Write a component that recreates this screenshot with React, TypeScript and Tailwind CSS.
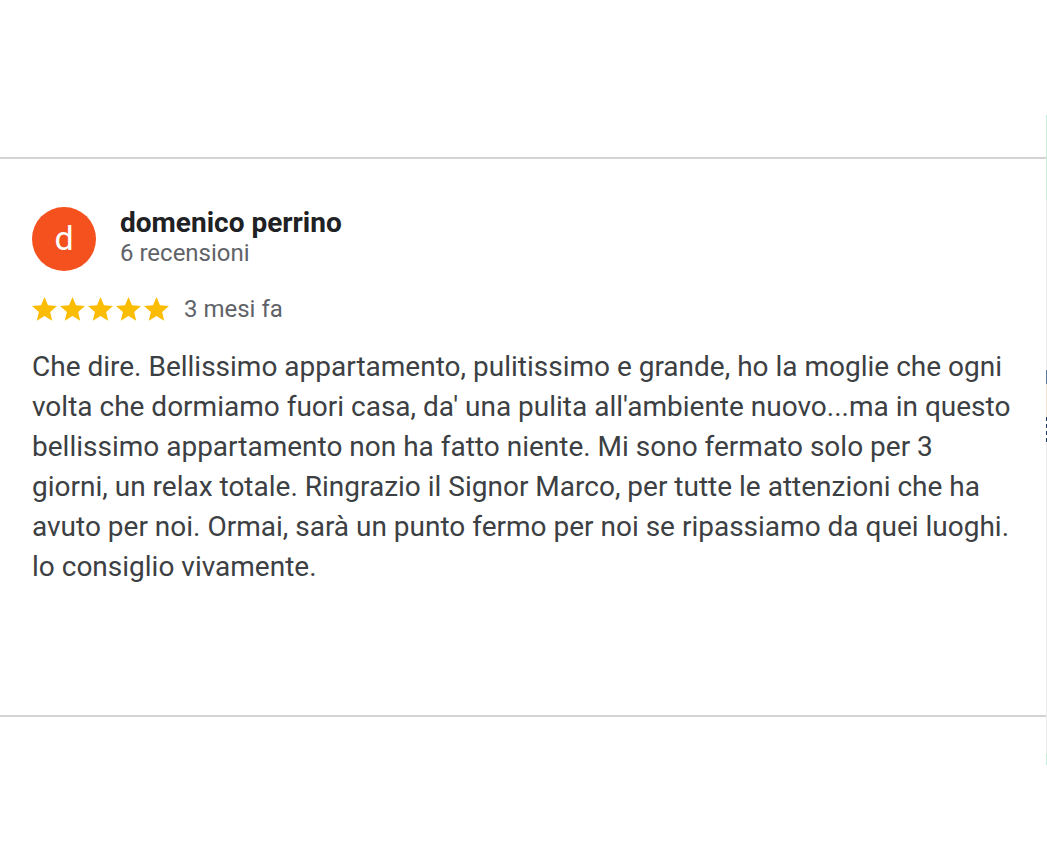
import React from "react";

const review =
  "Che dire. Bellissimo appartamento, pulitissimo e grande, ho la moglie che ogni volta che dormiamo fuori casa, da' una pulita all'ambiente nuovo...ma in questo bellissimo appartamento non ha fatto niente. Mi sono fermato solo per 3 giorni, un relax totale. Ringrazio il Signor Marco, per tutte le attenzioni che ha avuto per noi. Ormai, sarà un punto fermo per noi se ripassiamo da quei luoghi. lo consiglio vivamente.";

function Star() {
  return (
    <svg viewBox="2 2 20 19.3" className="w-[25px] h-[24px]" fill="#fbbc04">
      <path d="M12 17.27L18.18 21l-1.64-7.03L22 9.24l-7.19-.61L12 2 9.19 8.63 2 9.24l5.46 4.73L5.82 21z" />
    </svg>
  );
}

function EdgeStrip() {
  // thin sliver of the next panel peeking in at the right edge
  return (
    <div className="w-px flex flex-col pt-[115px]">
      <div className="h-[85px] bg-[#c9efdf]" />
      <div className="h-[170px] bg-[#ececec]" />
      <div className="h-[14px] bg-[#5b7ea8]" />
      <div className="h-[33px] bg-[#f2e5cf]" />
      <div className="h-[26px] bg-[repeating-linear-gradient(to_bottom,#1f3b63_0px,#1f3b63_4px,#ffffff_4px,#ffffff_7px)]" />
      <div className="h-[310px] bg-[#ececec]" />
      <div className="h-[12px] bg-[#c9efdf]" />
    </div>
  );
}

export default function App() {
  return (
    <div className="flex h-[854px] bg-white font-['Roboto',sans-serif]">
      <div className="w-[1046px] pt-[157px]">
        <section className="h-[560px] border-t-2 border-b-2 border-[#d3d3d3] pl-8 pr-[33px]">
          <div className="flex items-start gap-6 mt-[48px]">
            <div className="w-16 h-16 rounded-full bg-[#f4511e] flex items-center justify-center text-white text-[34px] leading-none pb-[2px]">
              d
            </div>
            <div className="mt-[1px]">
              <div className="text-[28px] leading-[30px] font-bold text-[#202124]">domenico perrino</div>
              <div className="text-[24px] leading-[30px] text-[#5f6368]">6 recensioni</div>
            </div>
          </div>
          <div className="flex items-center mt-[23px] h-[30px]">
            <div className="flex gap-[3px]">
              <Star />
              <Star />
              <Star />
              <Star />
              <Star />
            </div>
            <span className="ml-[15px] text-[24px] leading-[30px] text-[#5f6368]">3 mesi fa</span>
          </div>
          <p className="mt-[23px] text-[28px] leading-[40px] text-[#3c4043]">{review}</p>
        </section>
      </div>
      <EdgeStrip />
    </div>
  );
}
